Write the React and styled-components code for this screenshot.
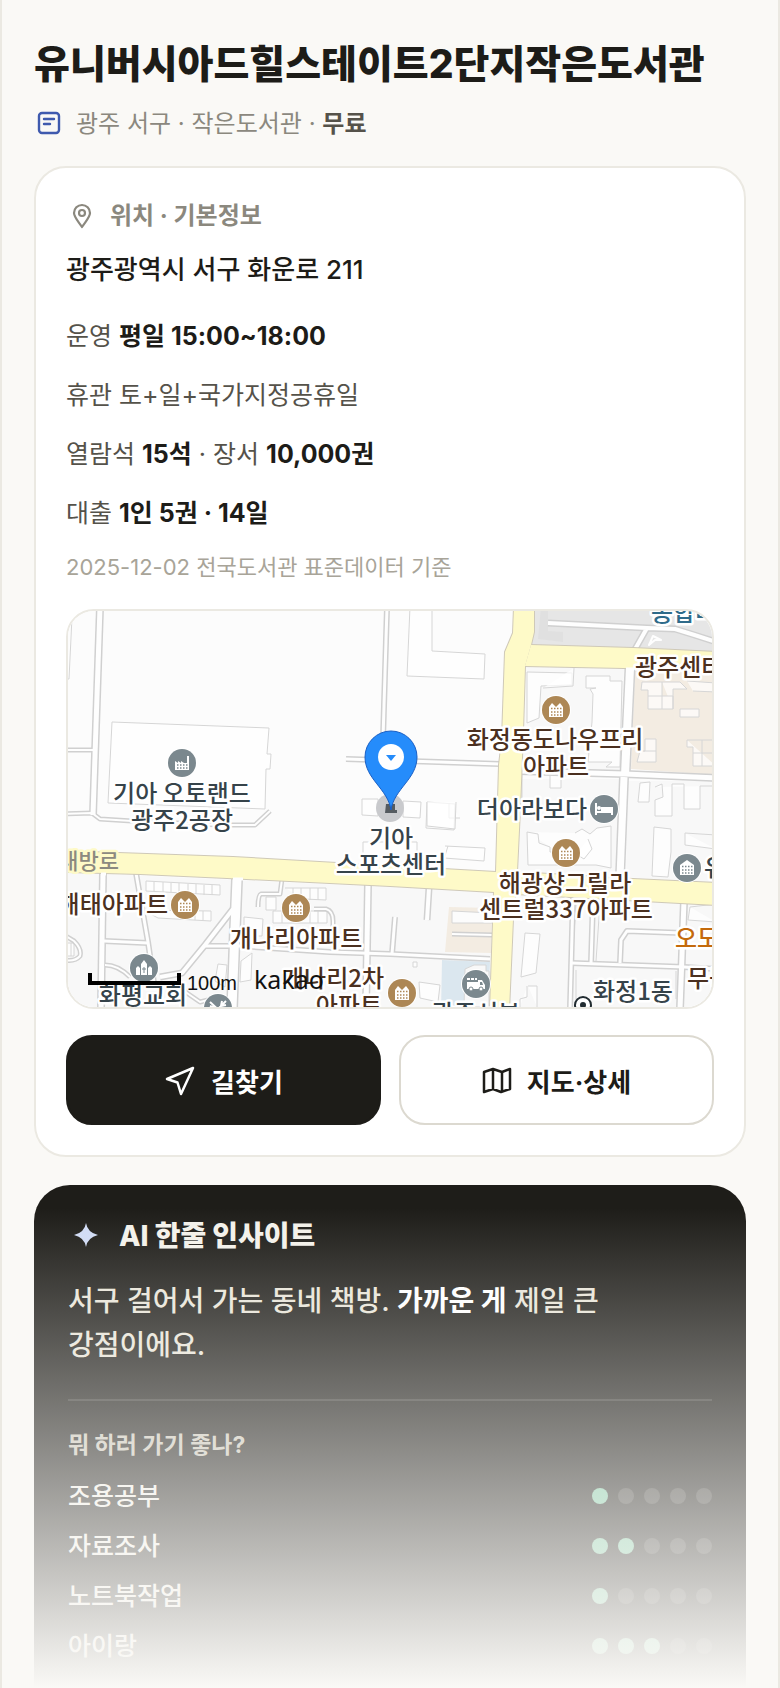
import React from "react";
import styled, { createGlobalStyle } from "styled-components";

//css
const GlobalStyle = createGlobalStyle`
  * {
    box-sizing: border-box;
  }
  body {
    margin: 0;
    background-color: #faf9f6;
    color: #1d1c18;
    font-family: Inter, "Noto Sans CJK KR", sans-serif;
    word-break: keep-all;
  }
`;

const PageContainer = styled.main`
  position: relative;
  display: flex;
  flex-direction: column;
  min-height: 100vh;
  padding: 38px 32px 0;
  border: 2px solid #ebe9e2;
  border-width: 0 2px;
`;

const Title = styled.h1`
  margin: 0;
  font-size: 39px;
  font-weight: 800;
  line-height: 52px;
`;

const SubTitle = styled.p`
  display: flex;
  align-items: center;
  gap: 12px;
  margin: 17px 0 25px;
  font-size: 24px;
  line-height: 34px;
  color: #8b887e;
  strong {
    font-weight: 600;
    color: #55524a;
  }
`;

const InfoCard = styled.section`
  padding: 30px;
  background-color: #fff;
  border: 2px solid #ebe9e2;
  border-radius: 32px;
`;

const InfoTitle = styled.h2`
  display: flex;
  align-items: center;
  gap: 12px;
  margin: 0 0 18px;
  font-size: 24px;
  font-weight: 700;
  line-height: 36px;
  color: #8b887e;
`;

const Address = styled.p`
  margin: 0 0 28px;
  font-size: 26px;
  font-weight: 500;
  line-height: 36px;
`;

const InfoRow = styled.p`
  margin: 0 0 19px;
  font-size: 25px;
  line-height: 40px;
  color: #55524a;
  strong {
    font-weight: 700;
    color: #1d1c18;
  }
`;

const DataNote = styled.p`
  margin: 0 0 27px;
  font-size: 22px;
  line-height: 30px;
  color: #a8a498;
`;

const MapBox = styled.div`
  height: 400px;
  overflow: hidden;
  border: 2px solid #ebe9e2;
  border-radius: 28px;
  svg {
    display: block;
    width: 100%;
    height: 100%;
  }
`;

const ButtonRow = styled.div`
  display: grid;
  grid-template-columns: 1fr 1fr;
  gap: 18px;
  margin-top: 26px;
`;

const ActionButton = styled.button`
  display: flex;
  align-items: center;
  justify-content: center;
  gap: 15px;
  height: 90px;
  border: 2px solid ${(props) => (props.$primary ? "#1d1c18" : "#dcd9d0")};
  border-radius: 26px;
  background-color: ${(props) => (props.$primary ? "#1d1c18" : "#fff")};
  color: ${(props) => (props.$primary ? "#fff" : "#1d1c18")};
  font-family: inherit;
  font-size: 26px;
  font-weight: 700;
  cursor: pointer;
`;

const InsightCard = styled.section`
  flex: 1;
  margin-top: 28px;
  padding: 30px 34px 10px;
  background-color: #1e1d19;
  border-radius: 36px 36px 0 0;
  color: #f3f1ea;
`;

const InsightTitle = styled.h2`
  display: flex;
  align-items: center;
  gap: 15px;
  margin: 0;
  font-size: 28px;
  font-weight: 800;
  line-height: 42px;
`;

const InsightText = styled.p`
  margin: 22px 0 0;
  padding-bottom: 32px;
  border-bottom: 2px solid #3a3935;
  font-size: 28px;
  font-weight: 500;
  line-height: 44px;
  color: #e8e4d8;
  strong {
    font-weight: 700;
    color: #fff;
  }
`;

const PurposeTitle = styled.h3`
  margin: 26px 0 8px;
  font-size: 23px;
  font-weight: 700;
  line-height: 36px;
  color: #c9c5b8;
`;

const PurposeList = styled.ul`
  margin: 0;
  padding: 0;
  list-style: none;
`;

const PurposeRow = styled.li`
  display: flex;
  align-items: center;
  justify-content: space-between;
  font-size: 25px;
  font-weight: 500;
  line-height: 50px;
  color: #f3f1ea;
`;

const Dots = styled.div`
  display: flex;
  gap: 10px;
`;

const Dot = styled.span`
  width: 16px;
  height: 16px;
  border-radius: 50%;
  background-color: ${(props) => (props.$on ? "#7fc8a4" : "#403f3b")};
`;

const BottomFade = styled.div`
  position: absolute;
  left: 0;
  right: 0;
  bottom: 0;
  height: 480px;
  background: linear-gradient(rgba(250, 249, 246, 0), #faf9f6);
  pointer-events: none;
`;

//map
const Label = styled.text`
  font-family: "Noto Sans CJK KR", sans-serif;
  font-size: ${(props) => props.$size || 24}px;
  font-weight: 500;
  text-anchor: ${(props) => props.$anchor || "middle"};
  fill: ${(props) => props.$color || "#36434a"};
  stroke: ${(props) => props.$halo || "#fff"};
  stroke-width: 5px;
  stroke-linejoin: round;
  paint-order: stroke;
`;

const MapMark = styled.text`
  font-family: ${(props) => props.$family};
  font-size: ${(props) => props.$size}px;
  fill: #111;
`;

const BROWN = "#4b3020";

const roads = [
  { w: 8, d: "M100 608 L93 816" },
  { w: 5, d: "M64 751 H94" },
  { w: 6, d: "M387 608 L383 740" },
  { w: 6, d: "M346 760 L500 765" },
  { w: 5, d: "M64 815 L92 814 L100 820 L132 822 L220 826 L255 826 L270 812" },
  { w: 8, d: "M103 874 L101 1010" },
  { w: 6, d: "M136 874 L148 943 L154 984" },
  { w: 12, d: "M237 880 L235 930 L232 1010" },
  { w: 7, d: "M233 910 L205 946 L182 974 L160 978" },
  { w: 6, d: "M104 942 L148 944" },
  { w: 6, d: "M205 947 L240 947 L330 953 L390 955 L490 960" },
  { w: 8, d: "M368 884 L366 1010" },
  { w: 5, d: "M282 880 L280 895 L261 895 Q258 896 258 908" },
  { w: 5, d: "M314 910 L326 910 Q333 912 333 922 L333 946" },
  { w: 5, d: "M64 936 L74 942 Q82 950 80 957 Q75 963 64 961" },
  { w: 5, d: "M105 966 Q118 966 130 978" },
  { w: 5, d: "M184 992 L200 1003 L212 1000" },
  { w: 7, d: "M429 889 L427 921" },
  { w: 6, d: "M395 918 L392 955" },
  { w: 5, d: "M452 935 L493 936" },
  { w: 6, d: "M573 898 L570 1010" },
  { w: 6, d: "M593 900 L591 965" },
  { w: 6, d: "M571 964 L684 968 L716 970" },
  { w: 8, d: "M684 902 L680 1010" },
  { w: 6, d: "M620 964 L621 941 L627 932 L682 934" },
  { w: 11, d: "M630 669 L625 776" },
  { w: 8, d: "M519 772 L625 775 L716 779" },
  { w: 10, d: "M624 778 L620 878" },
];

const buildings = [
  "M72 618 L69 680 H66",
  "M112 723 L269 729 L267 755 L271 755 L270 770 L266 770 L265 810 L108 804 Z",
  "M410 608 L407 677 L484 680 L485 655 L432 652 L432 608",
  "M527 673 L572 674 V686 L541 687 L539 719 L527 724 Z",
  "M574 669 L573 687 L543 689",
  "M586 677 H610 V682 L622 682 L620 768 H606 L612 763 H588 L592 723 L593 695 L590 690 L596 689 H586 Z",
  "M642 683 H662 V710 H648 V691 H641 Z M648 697 H673 V710 H662 M662 683 H680 L687 690 H673 V710 M687 682 L716 684 V693 L693 692",
  "M680 710 H699 V718 H680 Z",
  "M687 741 H716 M687 741 V748 H693 V767 H716 M702 741 V767 M693 754 H716",
  "M645 740 H656 V763 H637 L640 752 H645 Z M636 752 H656",
  "M362 800 H378 V817 L362 816 Z M403 802 L421 803 L420 819 L403 818 Z",
  "M427 803 L455 805 L454 831 L426 829 Z M449 804 V819 H460",
  "M427 803 L427 827 L455 830 L456 803",
  "M445 847 L485 849 L484 862 L444 859",
  "M363 858 V843 H417 V862 M444 860 L448 847",
  "M550 777 V789 H561 V778 M522 776 V805",
  "M527 833 L538 835 L539 844 L550 848 V853 H558 M575 834 L582 830 L590 835 L597 829 L611 827 V869 L596 866 H528 L527 833",
  "M576 855 L584 860 L592 850 L588 840",
  "M640 784 L650 783 L649 803 L638 803 Z M655 788 L662 785 L663 798 L655 801 V817 H672 V785 H684 V810 H700 V787 H712",
  "M654 828 L671 830 V853 L668 878 L652 877 Z M685 834 L716 836 M685 834 V846 L716 850",
  "M146 882 L220 886 V896 L146 892 Z M154 883 V893 M163 883 V893 M171 884 V894 M179 884 V894 M188 885 V895 M196 885 V895 M204 886 V896 M212 886 V896",
  "M143 911 L211 912 V922 L158 919 Z M186 912 V921 M195 912 V921 M203 912 V921",
  "M285 889 H326 V901 L304 900 M293 889 V897 M301 889 V897 M310 889 V901 M318 889 V901",
  "M273 912 L327 912 V924 L273 924 Z M282 912 V924 M310 912 V924 M318 912 V924 M266 898 H276 V911 H266 Z",
  "M244 918 L263 920 L262 937 L244 937 Z",
  "M218 965 L227 966 L225 988 L215 982 Z M252 954 L251 981 L240 983 L241 962 Z",
  "M68 944 H74 V957 H68 M71 944 V957",
  "M419 983 L440 986 L438 1003 L420 999 Z M413 963 H417 V968 H413 Z",
  "M525 934 L540 935 L536 974 L521 978 Z M528 987 H537 V1008 M527 987 V998 L520 1000 V1008",
  "M576 906 L572 962 M600 904 L596 962 M576 971 V1008 M676 972 V1000",
  "M690 908 L716 905 M690 908 L688 921 L716 923",
];

const yellowRoads = [
  "M531 646 L633 649 L716 653 V673 L624 669 L525 667 Z",
  "M64 852 L233 858 L337 864 L443 870 L496 873 L517 873 L633 880 L716 884 V906 L680 904 L607 900 L515 895 L494 893 L390 887 L227 879 L140 875 L64 873 Z",
  "M514 608 L513 634 L505 653 L502 740 L499 766 L496 873 L494 893 L490 1012 H509 L513 920 L517 873 L520 810 L523 733 L525 667 L531 646 L534 633 L534 608 Z",
];

const ApartmentIcon = ({ x, y }) => (
  <g transform={`translate(${x} ${y})`}>
    <circle r="15" fill="#fff" />
    <circle r="14" fill="#ad8755" />
    <path d="M-7 7 V-3 L-4 -7 L0 -3 L4 -7 L7 -3 V7 Z" fill="#fff" />
    <path
      d="M-5 -1.500 H6 M-5 2 H6 M-5 5 H6"
      stroke="#ad8755"
      strokeWidth="1.500"
      strokeDasharray="1.500 1.500"
    />
  </g>
);

const PlaceIcon = ({ x, y, children }) => (
  <g transform={`translate(${x} ${y})`}>
    <circle r="15" fill="#fff" />
    <circle r="14" fill="#7b888e" />
    {children}
  </g>
);

const AreaMap = () => (
  <svg
    viewBox="68 612 644 396"
    preserveAspectRatio="xMidYMid slice"
    role="img"
    aria-label="지도"
  >
    <rect x="-400" y="600" width="1600" height="420" fill="#fcfcfc" />
    <path d="M64 873 L494 893 L490 1012 H64 Z" fill="#f8f8f8" />
    <path
      d="M526 668 L624 670 L620 772 L521 772 Z M515 895 L716 906 V1012 H509 Z M521 780 H622 V876 L517 872 Z M628 782 H716 V884 L626 878 Z"
      fill="#f8f8f8"
    />
    <path d="M534 608 H716 V653 L531 646 Z" fill="#e6e6e6" />
    <path d="M541 608 L538 640 L563 643 V633 L548 632 V608 Z" fill="#e0e0e0" />
    <path d="M635 671 L716 673 V776 L631 770 Z" fill="#f3ece2" />
    <path d="M449 908 L492 909 L491 954 L445 953 Z" fill="#f3ece2" />
    <path d="M442 961 L490 963 L488 1012 H441 Z" fill="#dbe7ef" />

    {buildings.map((d) => (
      <path key={d} d={d} fill="#fff" fillOpacity="0.7" stroke="#d6d6d6" />
    ))}
    <path d="M452 912 L492 914 V924 H452 Z" fill="#fcfcfc" stroke="#d6d6d6" />
    <path
      d="M465 970 L474 966 H486 V972 H489 V1008 H464 Z"
      fill="#f8f8f8"
      stroke="#d6d6d6"
    />

    <g fill="none" stroke="#d0d0d0" strokeLinejoin="round">
      {roads.map((road) => (
        <path key={road.d} d={road.d} strokeWidth={road.w} />
      ))}
      <path
        d="M548 624 L647 629 L675 630 Q695 636 716 643 M647 629 L634 652"
        strokeWidth="7"
      />
    </g>
    <g fill="none" stroke="#fefefe" strokeLinejoin="round">
      {roads.map((road) => (
        <path key={road.d} d={road.d} strokeWidth={road.w - 3} />
      ))}
      <path
        d="M548 624 L647 629 L675 630 Q695 636 716 643 M647 629 L634 652"
        strokeWidth="4"
      />
      <path d="M649 646 L653 637 L661 641 L655 641 Z" strokeWidth="2" />
    </g>

    <g stroke="#cfc9b8" strokeWidth="2">
      {yellowRoads.map((d) => (
        <path key={d} d={d} fill="none" />
      ))}
    </g>
    <g fill="#fefac8">
      {yellowRoads.map((d) => (
        <path key={d} d={d} />
      ))}
    </g>
    <path
      d="M101 875 L106 875 M233 880 H243 M626 670 H634"
      stroke="#fefefe"
      strokeWidth="3"
    />

    <Label x="651" y="622" $anchor="start" $color="#2f6b8a">종합버</Label>
    <Label x="635" y="677" $anchor="start" $color={BROWN}>광주센터</Label>
    <Label x="119" y="870" $anchor="end" $size={22} $color="#8c8980" $halo="#fefac8">
      내방로
    </Label>

    <ApartmentIcon x="556" y="711" />
    <Label x="555" y="749" $color={BROWN}>화정동도나우프리</Label>
    <Label x="556" y="776" $color={BROWN}>아파트</Label>

    <PlaceIcon x="182" y="764">
      <path d="M-7 7 V-2 L-4 0 V-2 L-1 0 V-2 L2 0 H5 V-7 H7 V7 Z" fill="#fff" />
      <path
        d="M-5 2 H6 M-5 5 H6"
        stroke="#7b888e"
        strokeWidth="1.500"
        strokeDasharray="1.500 1.500"
      />
    </PlaceIcon>
    <Label x="182" y="803">기아 오토랜드</Label>
    <Label x="182" y="830">광주2공장</Label>

    <PlaceIcon x="604" y="810">
      <path
        d="M-8 -6 V6 M-8 3 H8 M8 6 V-1 H-2 V2"
        fill="none"
        stroke="#fff"
        strokeWidth="2"
      />
      <rect x="-2" y="-2" width="10" height="5" fill="#fff" />
      <circle cx="-5" cy="-1" r="2" fill="#fff" />
    </PlaceIcon>
    <Label x="532" y="819">더아라보다</Label>

    <Label x="391" y="848">기아</Label>
    <Label x="391" y="874">스포츠센터</Label>

    <ApartmentIcon x="566" y="854" />
    <Label x="565" y="893" $color={BROWN}>해광샹그릴라</Label>
    <Label x="566" y="919" $color={BROWN}>센트럴337아파트</Label>

    <PlaceIcon x="687" y="869">
      <path d="M-7 7 V-3 L0 -8 L7 -3 V7 Z" fill="#fff" />
      <path
        d="M-5 -1.500 H6 M-5 2 H6 M-5 5 H6"
        stroke="#7b888e"
        strokeWidth="1.500"
        strokeDasharray="1.500 1.500"
      />
    </PlaceIcon>
    <Label x="704" y="877" $anchor="start">유</Label>

    <ApartmentIcon x="185" y="906" />
    <Label x="168" y="914" $anchor="end" $color={BROWN}>해태아파트</Label>
    <ApartmentIcon x="296" y="909" />
    <Label x="296" y="948" $color={BROWN}>개나리아파트</Label>

    <Label x="384" y="988" $anchor="end" $color={BROWN}>개나리2차</Label>
    <Label x="382" y="1015" $anchor="end" $color={BROWN}>아파트</Label>
    <ApartmentIcon x="402" y="994" />

    <PlaceIcon x="144" y="969">
      <path
        d="M-3 7 V-4 L0 -8 L3 -4 V7 Z M-8 7 V0 L-6 -2 L-4 0 V7 Z M4 7 V0 L6 -2 L8 0 V7 Z"
        fill="#fff"
      />
      <path d="M0 -1 V5 M-2 1 H2" stroke="#7b888e" />
    </PlaceIcon>
    <Label x="143" y="1005">화평교회</Label>
    <PlaceIcon x="218" y="1009">
      <path
        d="M-8 -6 L6 7 M8 -7 L-6 7 M-8 -2 L-3 0 M4 -7 L3 -2 L8 -3"
        fill="none"
        stroke="#fff"
        strokeWidth="2"
      />
    </PlaceIcon>

    <PlaceIcon x="476" y="985">
      <path d="M-9 -2 H2 V-4 H6 L9 1 V5 H-9 Z" fill="#fff" />
      <path d="M-9 -5 H1" stroke="#fff" strokeWidth="2" strokeDasharray="3 1" />
      <path d="M4 -2 H6 L7 1 H4 Z" fill="#7b888e" />
      <circle cx="-5" cy="5" r="2" fill="#fff" stroke="#7b888e" />
      <circle cx="5" cy="5" r="2" fill="#fff" stroke="#7b888e" />
    </PlaceIcon>
    <Label x="476" y="1023">광주서부</Label>

    <circle cx="583" cy="1006" r="8" fill="#fff" stroke="#222c31" strokeWidth="2" />
    <circle cx="583" cy="1006" r="3" fill="#222c31" />
    <Label x="593" y="1001" $anchor="start">화정1동</Label>
    <Label x="675" y="948" $anchor="start" $color="#c46a0c">오도</Label>
    <Label x="687" y="988" $anchor="start" $color={BROWN}>무등</Label>

    <path d="M90 974 V984 H179 V974" fill="none" stroke="#000" strokeWidth="4" />
    <MapMark x="187" y="991" $size={20} $family={'"Liberation Sans", sans-serif'}>
      100m
    </MapMark>
    <MapMark x="254" y="990" $size={25} $family={'"Noto Sans", sans-serif'}>
      kakao
    </MapMark>

    <circle cx="390" cy="809" r="14" fill="#c9cacd" />
    <path d="M386 805 H395 V811 H397 V814 H385 Z" fill="#555b60" />
    <path
      d="M391 811 C388 790 365 780 365 758 A26 26 0 0 1 417 758 C417 780 394 790 391 811 Z"
      fill="#258cfb"
      stroke="#1a5fc4"
    />
    <circle cx="391" cy="758" r="13" fill="#fff" />
    <path d="M386 756 H396 L391 762 Z" fill="#258cfb" />
  </svg>
);

const purposes = [
  { name: "조용공부", score: 1 },
  { name: "자료조사", score: 2 },
  { name: "노트북작업", score: 1 },
  { name: "아이랑", score: 3 },
];

const App = () => {
  return (
    <>
      <GlobalStyle />
      <PageContainer>
        <Title>유니버시아드힐스테이트2단지작은도서관</Title>
        <SubTitle>
          <svg width="30" height="26" viewBox="0 0 30 26" fill="none" stroke="#3f5aae">
            <rect x="5" y="2" width="20" height="20" rx="3" strokeWidth="2.400" />
            <path d="M10 8 H20 M10 13 H16" strokeWidth="2.400" strokeLinecap="round" />
          </svg>
          <span>
            광주 서구 · 작은도서관 · <strong>무료</strong>
          </span>
        </SubTitle>

        <InfoCard>
          <InfoTitle>
            <svg
              width="32"
              height="26"
              viewBox="0 0 32 26"
              fill="none"
              stroke="#8b887e"
              strokeWidth="2.200"
            >
              <path
                d="M16 24 C12 18 8 14 8 10 A8 8 0 0 1 24 10 C24 14 20 18 16 24 Z"
                strokeLinejoin="round"
              />
              <circle cx="16" cy="10" r="3" />
            </svg>
            위치 · 기본정보
          </InfoTitle>
          <Address>광주광역시 서구 화운로 211</Address>
          <InfoRow>
            운영 <strong>평일 15:00~18:00</strong>
          </InfoRow>
          <InfoRow>휴관 토+일+국가지정공휴일</InfoRow>
          <InfoRow>
            열람석 <strong>15석</strong> · 장서 <strong>10,000권</strong>
          </InfoRow>
          <InfoRow>
            대출 <strong>1인 5권 · 14일</strong>
          </InfoRow>
          <DataNote>2025-12-02 전국도서관 표준데이터 기준</DataNote>
          <MapBox>
            <AreaMap />
          </MapBox>
          <ButtonRow>
            <ActionButton type="button" $primary>
              <svg width="32" height="32" viewBox="0 0 32 32" fill="none" stroke="#fff">
                <path
                  d="M29 4 L3 15 L13.500 18.500 L17 30 Z"
                  strokeWidth="2.500"
                  strokeLinejoin="round"
                />
              </svg>
              길찾기
            </ActionButton>
            <ActionButton type="button">
              <svg width="30" height="30" viewBox="0 0 30 30" fill="none" stroke="#1d1c18">
                <path
                  d="M2 7 L11 4 L20 7 L28 4 V24 L19 27 L11 24 L2 27 Z M11 4 V24 M20 7 V27"
                  strokeWidth="2.500"
                  strokeLinejoin="round"
                />
              </svg>
              지도·상세
            </ActionButton>
          </ButtonRow>
        </InfoCard>

        <InsightCard>
          <InsightTitle>
            <svg width="36" height="28" viewBox="0 0 36 28">
              <path
                d="M18 1 Q19.500 10.500 30 13 Q19.500 15.500 18 25 Q16.500 15.500 6 13 Q16.500 10.500 18 1 Z"
                fill="#d0dbf5"
              />
            </svg>
            AI 한줄 인사이트
          </InsightTitle>
          <InsightText>
            서구 걸어서 가는 동네 책방. <strong>가까운 게</strong> 제일 큰 강점이에요.
          </InsightText>
          <PurposeTitle>뭐 하러 가기 좋나?</PurposeTitle>
          <PurposeList>
            {purposes.map((purpose) => (
              <PurposeRow key={purpose.name}>
                {purpose.name}
                <Dots role="img" aria-label={`${purpose.score} / 5`}>
                  {[1, 2, 3, 4, 5].map((n) => (
                    <Dot key={n} $on={n <= purpose.score} />
                  ))}
                </Dots>
              </PurposeRow>
            ))}
          </PurposeList>
        </InsightCard>
        <BottomFade />
      </PageContainer>
    </>
  );
};

export default App;
